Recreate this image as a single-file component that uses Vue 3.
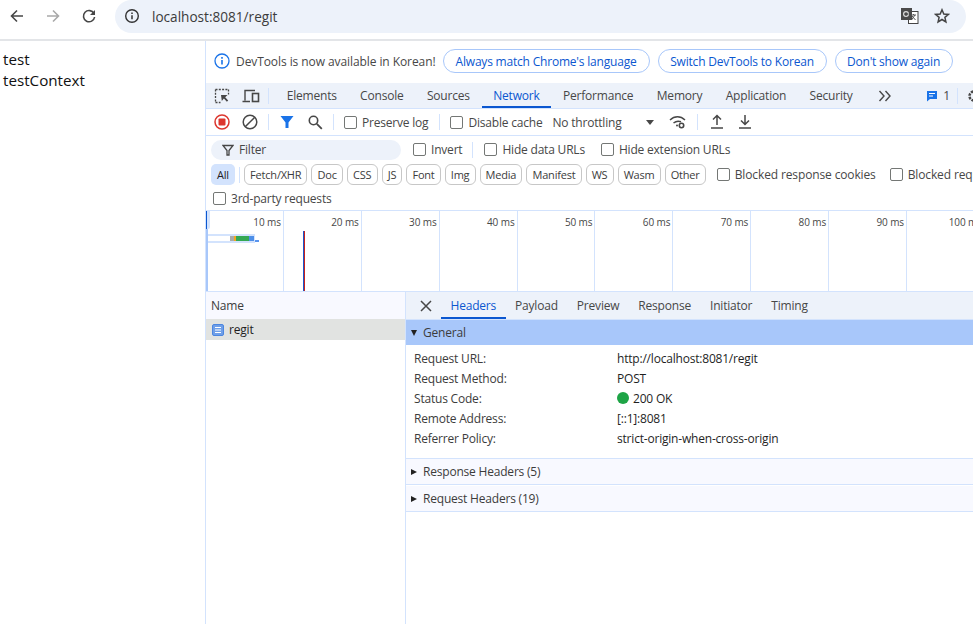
<script setup>
const tabs = ['Elements', 'Console', 'Sources', 'Network', 'Performance', 'Memory', 'Application', 'Security']
const chips = ['Fetch/XHR', 'Doc', 'CSS', 'JS', 'Font', 'Img', 'Media', 'Manifest', 'WS', 'Wasm', 'Other']
const ticks = [10, 20, 30, 40, 50, 60, 70, 80, 90, 100]
const detailTabs = ['Headers', 'Payload', 'Preview', 'Response', 'Initiator', 'Timing']
const rows = [
  ['Request URL:', 'http://localhost:8081/regit'],
  ['Request Method:', 'POST'],
  ['Status Code:', '200 OK'],
  ['Remote Address:', '[::1]:8081'],
  ['Referrer Policy:', 'strict-origin-when-cross-origin']
]
</script>

<template>
  <div class="screen">
    <header class="browser">
      <svg class="nav back" width="16" height="16" viewBox="0 0 16 16"><path d="M14 8H3M8 2.500 2.500 8 8 13.500" fill="none" stroke="#474747" stroke-width="1.600"/></svg>
      <svg class="nav fwd" width="16" height="16" viewBox="0 0 16 16"><path d="M2 8h11M8 2.500 13.500 8 8 13.500" fill="none" stroke="#a9a9a9" stroke-width="1.600"/></svg>
      <svg class="nav reload" width="16" height="16" viewBox="0 0 16 16"><path d="M13 5.500A5.600 5.600 0 1 0 13.600 9" fill="none" stroke="#474747" stroke-width="1.600"/><path d="M14 2v5H9z" fill="#474747"/></svg>
      <div class="omni">
        <svg class="site" width="16" height="16" viewBox="0 0 16 16"><circle cx="8" cy="8" r="6.300" fill="none" stroke="#333" stroke-width="1.400"/><path d="M8 7.200v4M8 4.600v1.500" stroke="#333" stroke-width="1.500"/></svg>
        <span class="url">localhost:8081/regit</span>
        <span class="grow"></span>
        <svg class="translate" width="18" height="16" viewBox="0 0 18 16"><rect x="7.500" y="3.500" width="9.500" height="12" fill="#fff" stroke="#444"/><path d="M0 0h11v12H0z" fill="#4a4a4a"/><circle cx="5" cy="6" r="2.400" fill="none" stroke="#ddd" stroke-width="1.200"/><path d="M5.500 6h2M10 7h5M12.500 6v1M14 7l-3.500 5M11 8l3.500 4" stroke="#555" stroke-width="1" fill="none"/></svg>
        <svg class="star" width="16" height="16" viewBox="0 0 16 16"><path d="M8 1.800 9.800 6l4.600.4-3.500 3 1 4.500L8 11.500l-3.900 2.400 1-4.500-3.500-3L6.200 6z" fill="none" stroke="#444" stroke-width="1.500"/></svg>
      </div>
    </header>

    <div class="body">
      <main class="page">
        <div>test</div>
        <div>testContext</div>
      </main>

      <section class="devtools">
        <div class="infobar">
          <svg width="16" height="16" viewBox="0 0 16 16"><circle cx="8" cy="8" r="7" fill="none" stroke="#1a73e8" stroke-width="1.300"/><path d="M8 7v4.500M8 4v1.700" stroke="#1a73e8" stroke-width="1.600"/></svg>
          <span class="infotext">DevTools is now available in Korean!</span>
          <button class="pill p1">Always match Chrome's language</button>
          <button class="pill p2">Switch DevTools to Korean</button>
          <button class="pill p3">Don't show again</button>
        </div>

        <div class="tabs">
          <svg class="ico" width="16" height="16" viewBox="0 0 16 16"><path d="M1.500 1.500h13M1.500 1.500v13M14.500 1.500v5M1.500 14.500h5" fill="none" stroke="#474747" stroke-width="1.300" stroke-dasharray="2 1.300"/><path d="M7 7h6.500l-2.300 2.200 3 3.300-1.300 1.300-3-3.300L7.800 13z" fill="#474747"/></svg>
          <svg class="ico dev" width="18" height="16" viewBox="0 0 18 16"><path d="M3 12.500V2.500h10M.5 13.500H8" fill="none" stroke="#474747" stroke-width="1.400"/><rect x="10.500" y="5.500" width="6" height="8" fill="none" stroke="#474747" stroke-width="1.600"/></svg>
          <i class="vsep"></i>
          <span class="tab-list">
            <span v-for="t in tabs" :key="t" class="tab" :class="{ active: t === 'Network' }">{{ t }}</span>
          </span>
          <svg class="more" width="14" height="12" viewBox="0 0 14 12"><path d="M1.500 1 6 6l-4.500 5M7.500 1 12 6l-4.500 5" fill="none" stroke="#474747" stroke-width="1.400"/></svg>
          <span class="issues">
            <svg width="12" height="12" viewBox="0 0 12 12"><path d="M1 1h10v8H4l-3 2.500z" fill="#1a73e8"/><path d="M3 3.500h6M3 6h4" stroke="#fff"/></svg>
            <span>1</span>
          </span>
          <i class="vsep last"></i>
          <svg class="gear" width="14" height="16" viewBox="0 0 14 16"><circle cx="9" cy="8" r="4.500" fill="none" stroke="#474747" stroke-width="2.500" stroke-dasharray="2.500 1"/></svg>
        </div>

        <div class="netbar">
          <svg class="rec" width="16" height="16" viewBox="0 0 16 16"><circle cx="8" cy="8" r="7" fill="none" stroke="#dc362e" stroke-width="1.500"/><rect x="4.500" y="4.500" width="7" height="7" rx="1" fill="#dc362e"/></svg>
          <svg class="clear" width="16" height="16" viewBox="0 0 16 16"><circle cx="8" cy="8" r="6.800" fill="none" stroke="#474747" stroke-width="1.500"/><path d="M3.200 12.800 12.800 3.200" stroke="#474747" stroke-width="1.500"/></svg>
          <i class="vsep s1"></i>
          <svg class="funnel" width="14" height="14" viewBox="0 0 14 14"><path d="M.5 1h13L8.500 7.500V13h-3V7.500z" fill="#1a73e8"/></svg>
          <svg class="search" width="16" height="16" viewBox="0 0 16 16"><circle cx="6.500" cy="6.500" r="4.200" fill="none" stroke="#474747" stroke-width="1.600"/><path d="m9.800 9.800 5 5" stroke="#474747" stroke-width="1.800"/></svg>
          <i class="vsep s2"></i>
          <label class="chk"><i class="box"></i>Preserve log</label>
          <i class="vsep s3"></i>
          <label class="chk"><i class="box"></i>Disable cache</label>
          <span class="throttle">No throttling</span>
          <i class="caret"></i>
          <svg class="wifi" width="18" height="14" viewBox="0 0 18 14"><path d="M1 5C5.500.8 11.500.8 16 5M4.500 8c2.500-2 5-2.300 7.500-1.200" fill="none" stroke="#474747" stroke-width="1.500"/><circle cx="12.500" cy="10.500" r="2.200" fill="none" stroke="#474747" stroke-width="1.600"/><circle cx="8" cy="10.500" r="1" fill="#474747"/></svg>
          <i class="vsep s4"></i>
          <svg class="updown up" width="14" height="16" viewBox="0 0 14 16"><path d="M7 11V2M3 5.500 7 1.500l4 4M1 14h12" fill="none" stroke="#474747" stroke-width="1.500"/></svg>
          <svg class="updown" width="14" height="16" viewBox="0 0 14 16"><path d="M7 1v9M3 6.500l4 4 4-4M1 14h12" fill="none" stroke="#474747" stroke-width="1.500"/></svg>
        </div>

        <div class="filters">
          <div class="frow one">
            <div class="filter">
              <svg width="12" height="12" viewBox="0 0 12 12"><path d="M1 1.500h10L7 6.500V11H5V6.500z" fill="none" stroke="#474747" stroke-width="1.300"/></svg>
              <span>Filter</span>
            </div>
            <label class="chk invert"><i class="box"></i>Invert</label>
            <i class="vsep s5"></i>
            <label class="chk hide1"><i class="box"></i>Hide data URLs</label>
            <label class="chk hide2"><i class="box"></i>Hide extension URLs</label>
          </div>
          <div class="frow two">
            <span class="all">All</span>
            <i class="vsep s6"></i>
            <span v-for="c in chips" :key="c" class="chip">{{ c }}</span>
            <label class="chk blocked"><i class="box"></i>Blocked response cookies</label>
            <label class="chk blocked2"><i class="box"></i>Blocked requests</label>
          </div>
          <div class="frow three">
            <label class="chk"><i class="box"></i>3rd-party requests</label>
          </div>
        </div>

        <div class="overview">
          <div v-for="t in ticks" :key="t" class="cell"><span>{{ t }} ms</span></div>
          <i class="handle"></i>
          <i class="grip"></i>
          <i class="wf-bg"></i>
          <i class="wf-in"></i>
          <i class="wf gray"></i><i class="wf orange"></i><i class="wf green"></i><i class="wf blue"></i><i class="wf dash"></i>
          <i class="loadline"></i>
        </div>

        <div class="split">
          <div class="names">
            <div class="name-head">Name</div>
            <div class="name-row">
              <svg width="12" height="12" viewBox="0 0 12 12"><rect x=".5" y=".5" width="11" height="11" rx="1.500" fill="#6f9fe8" stroke="#4c86e0"/><path d="M3 3.500h6M3 6h6M3 8.500h6" stroke="#fff"/></svg>
              <span>regit</span>
            </div>
          </div>
          <div class="detail">
            <div class="dtabs">
              <svg class="close" width="12" height="12" viewBox="0 0 12 12"><path d="m1 1 10 10M11 1 1 11" stroke="#474747" stroke-width="1.500"/></svg>
              <span v-for="t in detailTabs" :key="t" class="dtab" :class="{ active: t === 'Headers' }">{{ t }}</span>
            </div>
            <div class="general"><i class="tri down"></i>General</div>
            <div class="kv">
              <div v-for="r in rows" :key="r[0]" class="kv-row">
                <span class="k">{{ r[0] }}</span>
                <span class="v"><i v-if="r[1] === '200 OK'" class="dot"></i>{{ r[1] }}</span>
              </div>
            </div>
            <div class="sect"><i class="tri right"></i>Response Headers (5)</div>
            <div class="sect"><i class="tri right"></i>Request Headers (19)</div>
          </div>
        </div>
      </section>
    </div>
  </div>
</template>

<style>
html, body { margin: 0; background: #fff; }
</style>

<style scoped>
.screen {
  width: 973px; height: 624px; overflow: hidden; background: #fff; display: flex; flex-direction: column;
  font: 12px "Open Sans", "Noto Sans", sans-serif; letter-spacing: -.2px; color: #474747;
}
.browser { height: 39px; flex: none; display: flex; align-items: center; border-bottom: 2px solid #e3e5e8; box-sizing: content-box; position: relative; }
.nav { flex: none; margin-top: -7px; }
.back { margin-left: 9px; }
.fwd { margin-left: 20px; }
.reload { margin-left: 20px; }
.omni { margin: -7px 0 0 18px; width: 851px; height: 33px; border-radius: 17px; background: #edf2fa; display: flex; align-items: center; }
.site { margin-left: 9px; flex: none; }
.url { margin-left: 12px; font-size: 13.600px; color: #3c3c3c; letter-spacing: 0; }
.grow { flex: 1; }
.translate { margin-right: 15px; flex: none; }
.star { margin-right: 16px; flex: none; }
.body { flex: 1; display: flex; min-height: 0; }
.page { width: 205px; flex: none; padding: 8px 3px; box-sizing: border-box; font-size: 15.200px; line-height: 21px; letter-spacing: 0; color: #111; }
.devtools { flex: 1; min-width: 0; border-left: 1px solid #d3e3fd; display: flex; flex-direction: column; }
.infobar { height: 42px; flex: none; display: flex; align-items: center; padding: 0 0 2px 8px; box-sizing: border-box; position: relative; }
.infotext { margin-left: 6px; font-size: 12px; letter-spacing: -.08px; white-space: nowrap; }
.pill { height: 24px; border: 1px solid #a8c7fa; border-radius: 12px; background: #fff; color: #0b57d0; font: 12px "Open Sans", sans-serif; letter-spacing: -.2px; padding: 0; flex: none; }
.p1 { margin-left: 7px; width: 207px; }
.p2 { margin-left: 8px; width: 169px; }
.p3 { margin-left: 8px; width: 118px; }
.vsep { display: block; width: 1px; height: 16px; background: #d3e3fd; flex: none; }
.tabs { height: 26px; flex: none; background: #edf2fa; border-bottom: 1px solid #d3e3fd; display: flex; align-items: center; box-sizing: border-box; white-space: nowrap; }
.ico { margin-left: 8px; flex: none; }
.dev { margin-left: 12px; }
.tabs > .vsep { margin-left: 8px; }
.tab-list { display: flex; margin-left: 6px; letter-spacing: -.2px; }
.tab { height: 25px; line-height: 25px; padding: 0 11.700px; box-sizing: border-box; }
.tab.active { color: #0b57d0; border-bottom: 2px solid #0b57d0; }
.more { margin-left: 14px; flex: none; }
.issues { display: flex; align-items: center; gap: 5px; margin-left: 34px; }
.issues svg { flex: none; }
.tabs > .vsep.last { margin-left: 7px; }
.gear { margin-left: 7px; flex: none; }
.netbar { height: 27px; flex: none; display: flex; align-items: center; border-bottom: 1px solid #d3e3fd; box-sizing: border-box; white-space: nowrap; }
.rec { margin-left: 8px; flex: none; }
.clear { margin-left: 12px; flex: none; }
.s1 { margin-left: 10px; }
.funnel { margin-left: 11px; flex: none; }
.search { margin-left: 13px; flex: none; }
.s2 { margin-left: 10px; }
.chk { display: flex; align-items: center; white-space: nowrap; flex: none; }
.box { display: block; width: 11px; height: 11px; border: 1px solid #747775; border-radius: 2px; margin-right: 5px; flex: none; background: #fff; }
.netbar > .chk { margin-left: 10px; }
.s3 { margin-left: 11px; }
.throttle { margin-left: 10px; }
.caret { width: 0; height: 0; border: 4px solid transparent; border-top: 5px solid #474747; border-bottom: 0; margin-left: 25px; flex: none; }
.wifi { margin-left: 15px; flex: none; }
.s4 { margin-left: 10px; }
.updown { margin-left: 14px; flex: none; }
.up { margin-left: 12px; }
.filters { height: 74px; flex: none; border-bottom: 1px solid #d3e3fd; box-sizing: content-box; }
.frow { display: flex; align-items: center; white-space: nowrap; }
.one { height: 27px; padding-left: 5px; }
.filter { width: 190px; height: 20px; border-radius: 10px; background: #edf2fa; display: flex; align-items: center; gap: 5px; padding-left: 11px; box-sizing: border-box; flex: none; }
.invert { margin-left: 12px; }
.s5 { margin-left: 10px; }
.hide1 { margin-left: 11px; }
.hide2 { margin-left: 16px; }
.two { height: 23px; padding-left: 5px; gap: 4px; }
.all { width: 24px; height: 21px; line-height: 21px; text-align: center; border-radius: 5px; background: #d3e3fd; flex: none; font-size: 11px; color: #1f1f1f; }
.two > .vsep { margin: 0; }
.chip { height: 21px; line-height: 19px; padding: 0 5.100px; border: 1px solid #c7c7c7; border-radius: 6px; box-sizing: border-box; flex: none; font-size: 11px; color: #3c3c3c; }
.blocked { margin-left: 7px; letter-spacing: -.13px; }
.blocked2 { margin-left: 10px; letter-spacing: -.13px; }
.three { height: 24px; padding-left: 7px; }
.overview { height: 80px; flex: none; display: flex; position: relative; border-bottom: 1px solid #d3e3fd; box-sizing: content-box; overflow: hidden; }
.cell { width: 77.900px; flex: none; border-right: 1px solid #d3e3fd; box-sizing: border-box; text-align: right; padding: 4px 2px 0 0; font-size: 10px; line-height: 14px; letter-spacing: -.1px; }
.handle { position: absolute; left: 0; top: 0; width: 2px; height: 80px; background: #a8c7fa; }
.grip { position: absolute; left: 0; top: 0; width: 4px; height: 18px; background: #d3e3fd; border-radius: 0 0 2px 0; border-left: 1px solid #0b57d0; box-sizing: border-box; }
.wf-bg { position: absolute; left: 2px; top: 23px; width: 47px; height: 9px; background: #d3e3fd; }
.wf-in { position: absolute; left: 2px; top: 25px; width: 22px; height: 5px; background: #fff; }
.wf { position: absolute; top: 25px; height: 5px; }
.gray { left: 24px; width: 6px; background: #aaa; }
.orange { left: 28px; width: 2px; background: #f5a623; }
.green { left: 30px; width: 13px; background: #34a853; }
.blue { left: 43px; width: 5px; background: #4d8fe8; }
.dash { left: 49px; top: 29px; width: 4px; height: 2px; background: #5a95ee; }
.loadline { position: absolute; left: 97px; top: 20px; width: 2px; height: 60px; background: linear-gradient(90deg, #1a56c8 50%, #c5221f 50%); }
.split { flex: 1; display: flex; min-height: 0; }
.names { width: 199px; flex: none; border-right: 1px solid #d3e3fd; }
.name-head { height: 27px; line-height: 27px; padding-left: 5px; background: #f8f9ff; color: #3c3c3c; }
.name-row { height: 21px; background: #e1e3e1; display: flex; align-items: center; gap: 5px; padding-left: 6px; color: #1f1f1f; }
.name-row svg { flex: none; }
.detail { flex: 1; min-width: 0; }
.dtabs { height: 27px; background: #edf2fa; display: flex; align-items: center; box-sizing: border-box; }
.close { margin: 0 9px 0 14px; flex: none; }
.dtab { height: 27px; line-height: 28px; padding: 0 9.500px; box-sizing: border-box; white-space: nowrap; }
.dtab.active { color: #0b57d0; border-bottom: 2px solid #0b57d0; }
.general { height: 25px; background: #a8c7fa; display: flex; align-items: center; padding-left: 5px; color: #3c3c3c; border-top: 1px solid #d3e3fd; box-sizing: content-box; }
.tri { display: block; width: 0; height: 0; border-style: solid; border-color: transparent; flex: none; margin-right: 6px; }
.tri.down { border-width: 6px 3.500px 0; border-top-color: #222; }
.tri.right { border-width: 3.500px 0 3.500px 6px; border-left-color: #222; margin-right: 6px; }
.kv { padding: 3px 0 10px 8px; border-bottom: 1px solid #d3e3fd; }
.kv-row { height: 20px; display: flex; align-items: center; color: #3c3c3c; white-space: nowrap; }
.k { width: 203px; flex: none; }
.v { display: flex; align-items: center; color: #1f1f1f; }
.dot { width: 12px; height: 12px; border-radius: 50%; background: #1ea446; margin-right: 4px; }
.sect { height: 25px; background: #f8f9ff; display: flex; align-items: center; padding-left: 5px; border-bottom: 1px solid #d3e3fd; color: #3c3c3c; margin-bottom: 1px; }
</style>
